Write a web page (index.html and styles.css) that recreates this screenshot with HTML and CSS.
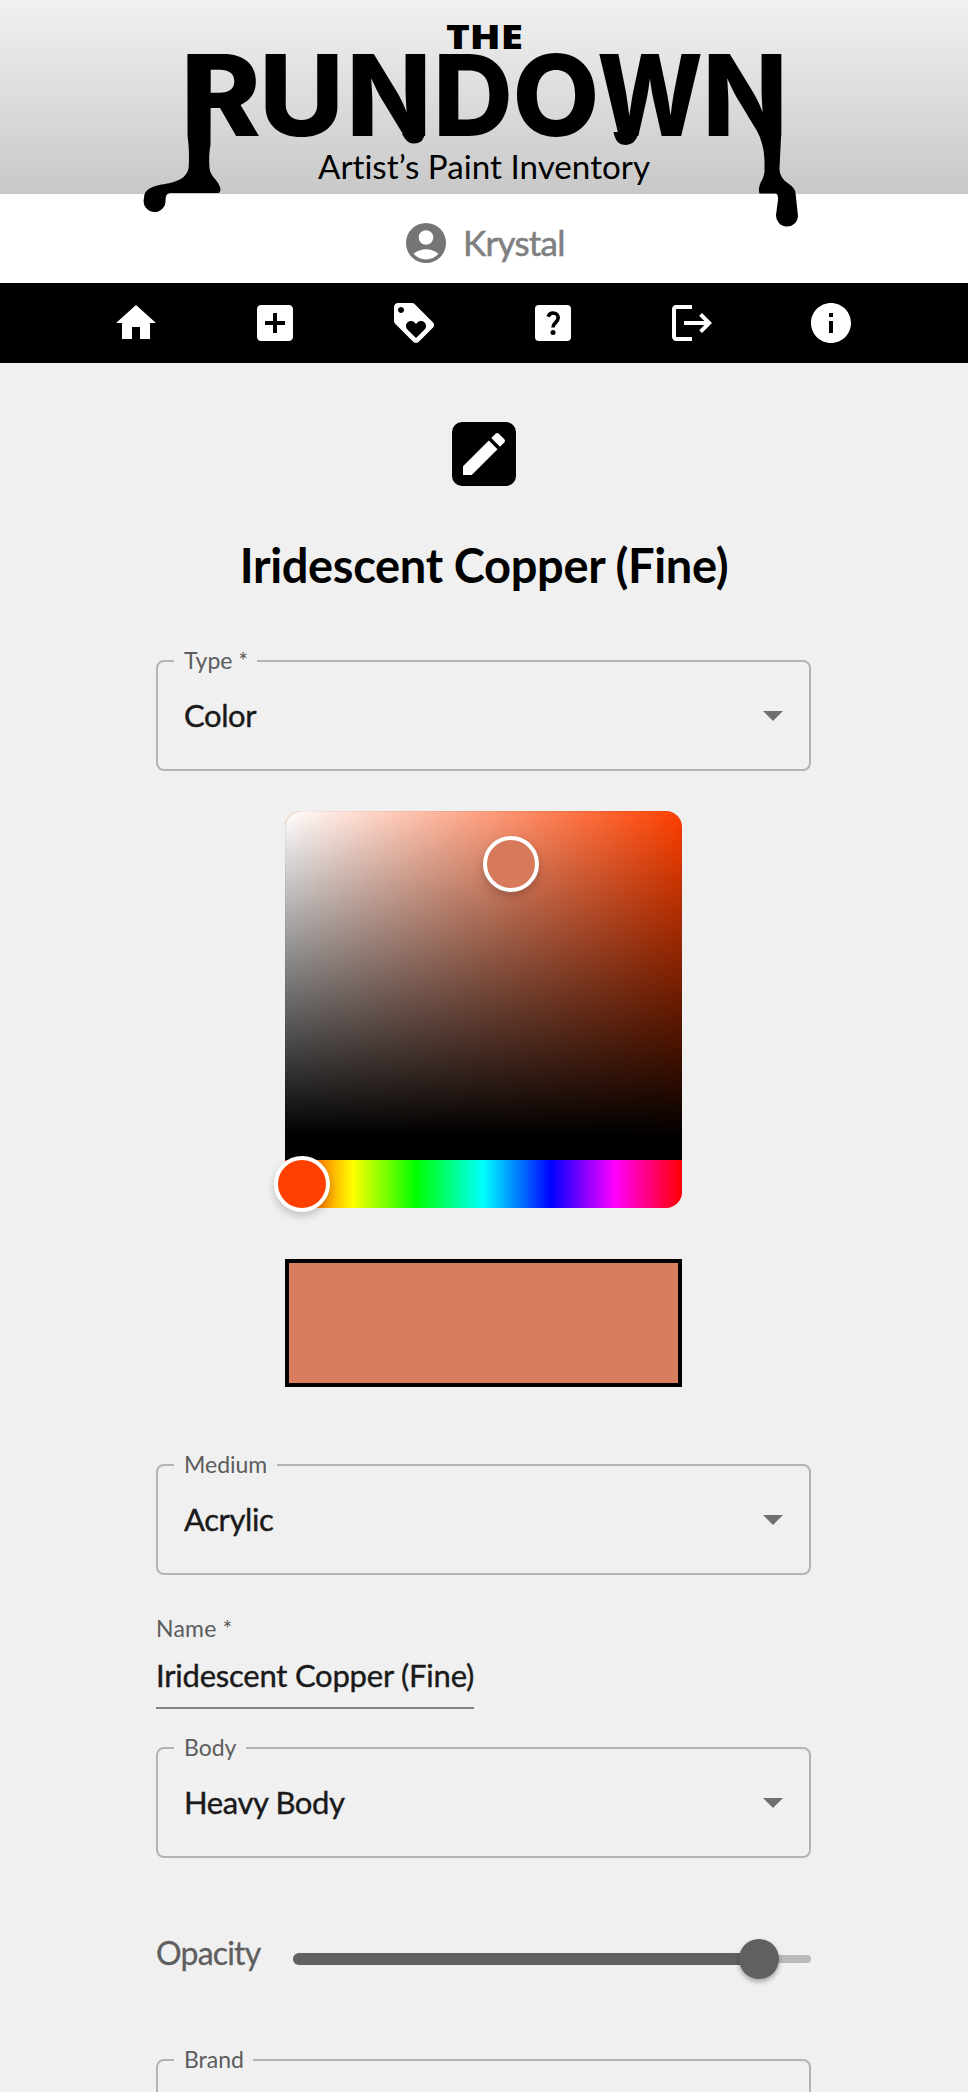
FILE: index.html
```html
<!DOCTYPE html>
<html lang="en">
<head>
<meta charset="utf-8">
<title>The Rundown</title>
<link rel="stylesheet" href="styles.css">
</head>
<body>
<header class="banner">
  <svg class="logo" width="968" height="240" viewBox="0 0 968 240">
    <text class="logo-the" x="446" y="48.6" textLength="77" lengthAdjust="spacingAndGlyphs">THE</text>
    <text class="logo-name" y="136"><tspan x="181" textLength="80" lengthAdjust="spacingAndGlyphs">R</tspan><tspan x="259" textLength="85" lengthAdjust="spacingAndGlyphs">U</tspan><tspan x="346.500" textLength="85" lengthAdjust="spacingAndGlyphs">N</tspan><tspan x="433" textLength="80" lengthAdjust="spacingAndGlyphs">D</tspan><tspan x="512.500" textLength="87" lengthAdjust="spacingAndGlyphs">O</tspan><tspan x="597" textLength="106" lengthAdjust="spacingAndGlyphs">W</tspan><tspan x="702.500" textLength="85" lengthAdjust="spacingAndGlyphs">N</tspan></text>
    <path d="M187.500 54.200H210.800L210.500 145Q208.500 155 209.500 168C210 177 219 180 220.500 189Q220.500 193 218 193H170C166 194 166 196 165.500 200A11 11 0 1 1 144 198C144 189 152 186 165 184C177 182 188 178 188.800 166Q189.500 150 187.700 137Z"/>
    <path d="M402 134L404.500 138Q408 143.500 414 143.500Q424.500 143 424.500 133V125Z"/>
    <path d="M613.500 132L614.500 136Q617 145 626 145Q636 144 638 134L638 132Z"/>
    <path d="M748 116L752 122Q764 140 764.500 160V172Q764 177 760 184Q758 190 759.500 193.500H775Q778.500 193.500 778 200L776 215A11 11 0 0 0 798 216L795.500 193Q795 188 789 184Q779 178 779.500 168L781.200 134V54.200H770V116Z"/>
    <text class="logo-tag" x="318" y="179" textLength="332" lengthAdjust="spacingAndGlyphs">Artist’s Paint Inventory</text>
  </svg>
</header>
<div class="user">
  <svg class="icon" viewBox="0 0 24 24"><path fill-rule="evenodd" d="M12 2a10 10 0 1 0 0 20 10 10 0 0 0 0-20zm0 3.600a3.600 3.600 0 1 1 0 7.300 3.600 3.600 0 0 1 0-7.300zM12 20.200c-2.500 0-4.700-1.100-6.200-2.800C7.600 15.900 9.700 15.100 12 15.100s4.400.8 6.200 2.300C16.700 19.100 14.500 20.200 12 20.200z"/></svg>
  <span class="user-name">Krystal</span>
</div>
<nav class="nav">
  <svg class="icon" viewBox="0 0 24 24"><path d="M10 20v-6h4v6h5v-8h3L12 3 2 12h3v8z"/></svg>
  <svg class="icon" viewBox="0 0 24 24"><path d="M19 3H5c-1.110 0-2 .9-2 2v14c0 1.100.89 2 2 2h14c1.100 0 2-.9 2-2V5c0-1.100-.9-2-2-2zm-2 10h-4v4h-2v-4H7v-2h4V7h2v4h4v2z"/></svg>
  <svg class="icon" viewBox="0 0 24 24"><path d="M21.410 11.580l-9-9C12.050 2.220 11.550 2 11 2H4c-1.100 0-2 .9-2 2v7c0 .55.22 1.050.59 1.420l9 9c.36.36.86.58 1.410.58.55 0 1.050-.22 1.410-.59l7-7c.37-.36.59-.86.59-1.410 0-.55-.23-1.060-.59-1.420zM5.500 7C4.670 7 4 6.330 4 5.500S4.670 4 5.500 4 7 4.670 7 5.500 6.330 7 5.500 7zm11.770 8.270L13 19.540l-4.270-4.270C8.280 14.810 8 14.190 8 13.500c0-1.380 1.120-2.500 2.500-2.500.69 0 1.320.28 1.770.74l.73.72.73-.73c.45-.45 1.080-.73 1.770-.73 1.380 0 2.500 1.120 2.500 2.500 0 .69-.28 1.320-.73 1.770z"/></svg>
  <svg class="icon" viewBox="0 0 24 24"><rect x="3" y="3" width="18" height="18" rx="2"/><path class="mark" d="M9.600 8.900C10 7.600 10.900 7 12 7c1.500 0 2.600 1 2.600 2.400 0 2.100-2.600 2.500-2.600 4.800"/><circle class="dot" cx="12" cy="16.800" r="1.250"/></svg>
  <svg class="icon" viewBox="0 0 24 24"><path d="m17 7-1.410 1.410L18.170 11H8v2h10.170l-2.580 2.580L17 17l5-5zM4 5h8V3H4c-1.100 0-2 .9-2 2v14c0 1.100.9 2 2 2h8v-2H4z"/></svg>
  <svg class="icon" viewBox="0 0 24 24"><path d="M12 2C6.480 2 2 6.480 2 12s4.480 10 10 10 10-4.480 10-10S17.520 2 12 2zm1 15h-2v-6h2v6zm0-8h-2V7h2v2z"/></svg>
</nav>
<main class="main">
  <div class="edit"><svg width="56" height="56" viewBox="0 0 24 24"><path d="M3 17.250V21h3.750L17.810 9.940l-3.750-3.750L3 17.250zM20.710 7.040c.39-.39.39-1.020 0-1.410l-2.340-2.340c-.39-.39-1.020-.39-1.410 0l-1.830 1.830 3.750 3.750 1.830-1.830z"/></svg></div>
  <h1 class="title">Iridescent Copper (Fine)</h1>
  <form class="form">
    <fieldset class="select">
      <legend class="label label-type">Type *</legend>
      <div class="value">Color</div><span class="arrow"></span>
    </fieldset>
    <div class="picker">
      <div class="saturation"><span class="handle handle-color"></span></div>
      <div class="hue"><span class="handle handle-hue"></span></div>
    </div>
    <div class="swatch"></div>
    <fieldset class="select">
      <legend class="label label-medium">Medium</legend>
      <div class="value">Acrylic</div><span class="arrow"></span>
    </fieldset>
    <div class="name-field">
      <div class="name-label">Name *</div>
      <div class="value name-value">Iridescent Copper (Fine)</div>
    </div>
    <fieldset class="select">
      <legend class="label label-body">Body</legend>
      <div class="value">Heavy Body</div><span class="arrow"></span>
    </fieldset>
    <div class="opacity">
      <span class="opacity-label">Opacity</span>
      <div class="slider"><div class="fill"></div><span class="thumb"></span></div>
    </div>
    <fieldset class="select">
      <legend class="label label-brand">Brand</legend>
    </fieldset>
  </form>
</main>
</body>
</html>
```
FILE: styles.css
```css
* { box-sizing: border-box; }
body {
  margin: 0;
  height: 2092px;
  overflow: hidden;
  background: #f0f0f0;
  font-family: Lato, "Open Sans", sans-serif;
}
.banner {
  height: 194px;
  background: linear-gradient(#f1f1f1, #c8c8c8);
}
.logo { display: block; position: relative; z-index: 1; }
.logo-the { font: 800 34.300px "Open Sans", sans-serif; }
.logo-name { font: 800 112.500px Inter, sans-serif; }
.logo-tag { font: 400 33px Lato, sans-serif; font-variant-ligatures: none; }
.icon { display: block; width: 48px; height: 48px; }
.user {
  height: 89px;
  display: flex;
  align-items: center;
  padding: 8px 0 0 402px;
  gap: 13px;
  background: #fff;
  color: #808080;
}
.user .icon { fill: #757575; }
.user-name { margin-top: -2px; font-size: 35px; line-height: 44px; letter-spacing: -0.750px; -webkit-text-stroke: 0.600px; }
.nav {
  height: 80px;
  padding: 0 68px 0 66px;
  display: flex;
  align-items: center;
  justify-content: space-around;
  background: #000;
  fill: #fff;
}
.nav .mark { fill: none; stroke: #000; stroke-width: 1.800; }
.nav .dot { fill: #000; }
.main { display: flex; flex-direction: column; align-items: center; padding-top: 59px; }
.edit {
  width: 64px;
  height: 64px;
  display: flex;
  align-items: center;
  justify-content: center;
  border-radius: 10px;
  background: #000;
  fill: #fff;
}
.title {
  margin: 50px 0 0;
  font-size: 47px;
  line-height: 58px;
  font-weight: 700;
  letter-spacing: -0.350px;
  white-space: nowrap;
}
.form {
  width: 656px;
  margin-top: 52px;
  display: flex;
  flex-direction: column;
  align-items: center;
}
.select {
  width: 655px;
  height: 125px;
  margin: 0;
  padding: 20px 26px 0;
  display: flex;
  flex-shrink: 0;
  align-self: flex-start;
  justify-content: space-between;
  align-items: center;
  border: 2px solid #b3b3b3;
  border-radius: 8px;
}
.label {
  height: 30px;
  margin-left: -10px;
  padding: 0 0 0 10px;
  font-size: 23px;
  line-height: 28px;
  white-space: nowrap;
  color: #5c5c5c;
}
.label-type { width: 83px; }
.label-medium { width: 103px; }
.label-body { width: 72px; }
.label-brand { width: 79px; }
.value {
  font-size: 31px;
  line-height: 38px;
  color: #1a1a1a;
  letter-spacing: -0.400px;
  white-space: nowrap;
  -webkit-text-stroke: 0.400px;
}
.arrow {
  margin-top: 2px;
  border: 10px solid transparent;
  border-top-color: #6f6f6f;
  border-bottom: 0;
}
.picker { width: 397px; margin: 40px 1px 0 0; border-radius: 16px; }
.saturation {
  height: 349px;
  position: relative;
  border-bottom: 24px solid #000;
  border-radius: 16px 16px 0 0;
  background: linear-gradient(0deg, #000, transparent), linear-gradient(90deg, #fff, rgba(255,255,255,0)), #ff4000;
  box-shadow: inset 0 0 0 1px rgba(0,0,0,0.050);
}
.hue {
  height: 48px;
  position: relative;
  border-radius: 0 0 16px 16px;
  background: linear-gradient(90deg, #f00 0%, #ff0 17%, #0f0 33%, #0ff 50%, #00f 67%, #f0f 83%, #f00 100%);
}
.handle {
  position: absolute;
  width: 56px;
  height: 56px;
  border: 4px solid #fff;
  border-radius: 50%;
  box-shadow: 0 4px 8px rgba(0,0,0,0.200);
}
.handle-color { left: 198px; top: 25px; background: #d77a5c; }
.handle-hue { left: -11px; top: -4px; background: #ff4000; }
.swatch {
  width: 397px;
  height: 128px;
  margin: 51px 1px 63px 0;
  border: 4px solid #000;
  background: #d87d5e;
}
.name-field {
  align-self: flex-start;
  width: 318px;
  height: 134px;
  margin-bottom: 24px;
  padding: 39px 0 0;
  border-bottom: 2px solid #828282;
}
.name-label { font-size: 23px; line-height: 28px; letter-spacing: 0.200px; color: #5c5c5c; }
.name-value { margin-top: 14px; letter-spacing: -0.220px; }
.opacity {
  width: 655px;
  align-self: flex-start;
  display: flex;
  align-items: center;
  justify-content: space-between;
  height: 187px;
  padding-top: 14px;
}
.opacity-label { margin-top: -12px; font-size: 32px; line-height: 40px; letter-spacing: -0.800px; color: #5f5f5f; -webkit-text-stroke: 0.300px; }
.slider {
  width: 518px;
  height: 8px;
  position: relative;
  display: flex;
  align-items: center;
  border-radius: 4px;
  background: #b9b9b9;
}
.fill { width: 90%; height: 12px; border-radius: 6px; background: #616161; }
.thumb {
  position: absolute;
  left: 446px;
  width: 40px;
  height: 40px;
  border-radius: 50%;
  background: #616161;
  box-shadow: 0 3px 5px rgba(0,0,0,0.300);
}
```
